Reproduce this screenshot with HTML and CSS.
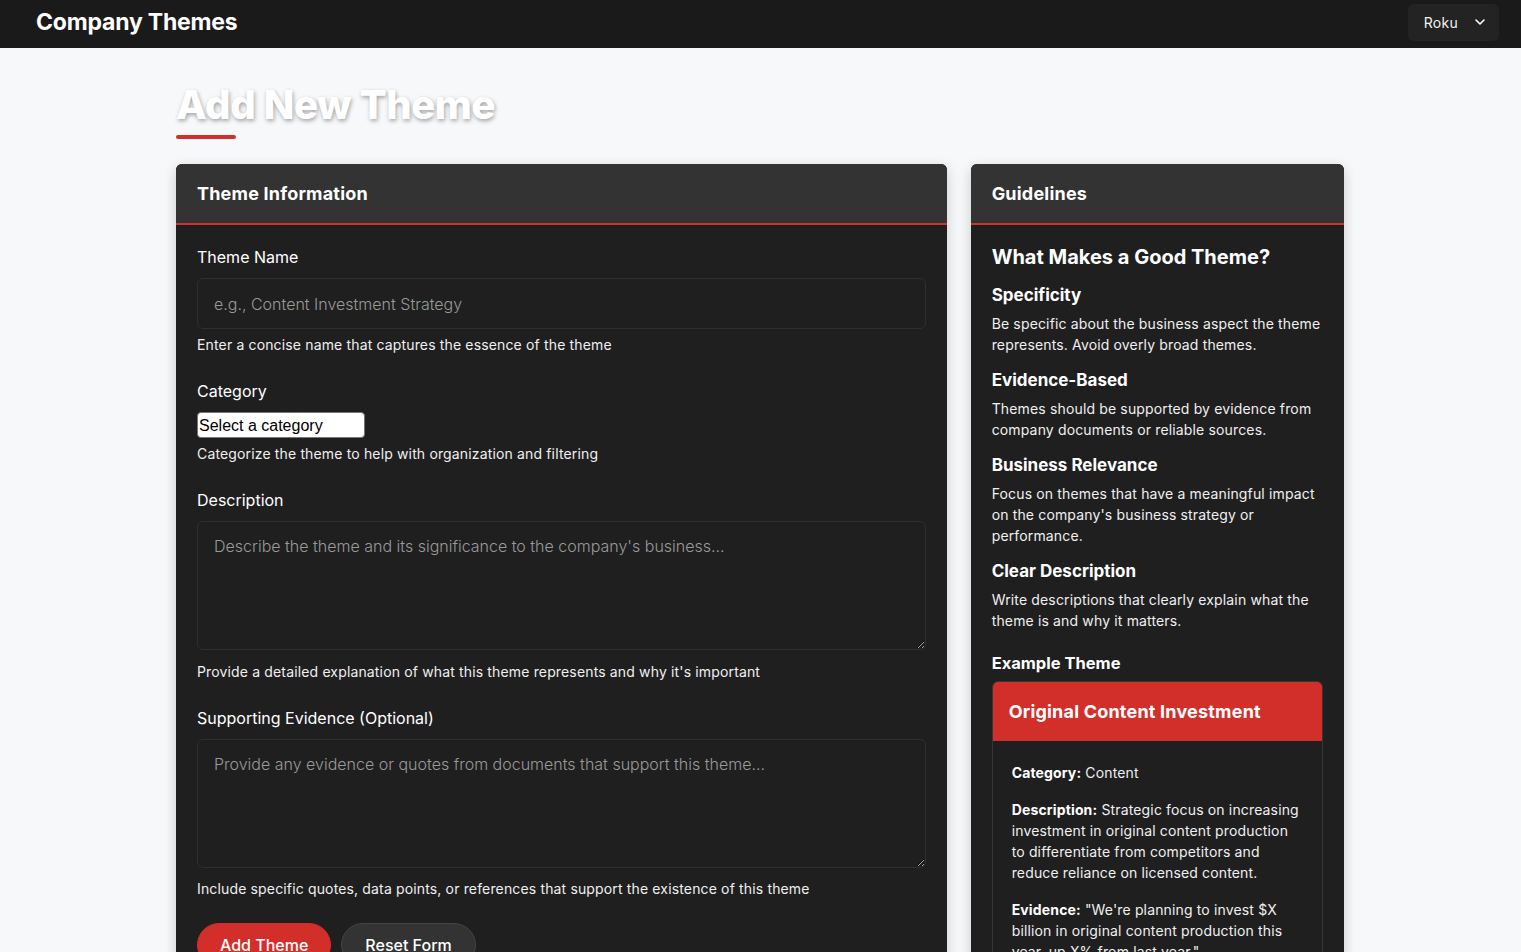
FILE: index.html
```html
<!DOCTYPE html>
<html lang="en">
<head>
<meta charset="utf-8">
<title>Add New Theme</title>
<link rel="stylesheet" href="styles.css">
</head>
<body>
<header class="topbar">
  <div class="brand">Company Themes</div>
  <button class="company-select" type="button">
    <span>Roku</span>
    <svg width="12" height="12" viewBox="0 0 12 12" fill="none" stroke="#ffffff" stroke-width="1.6" stroke-linecap="round" stroke-linejoin="round"><path d="M2 4l4 4 4-4"/></svg>
  </button>
</header>

<main class="container">
  <h1 class="page-title">Add New Theme</h1>
  <div class="title-bar"></div>

  <div class="layout">
    <section class="card">
      <div class="card-header">Theme Information</div>
      <div class="card-body">
        <div class="field">
          <label class="label" for="name">Theme Name</label>
          <input class="input" id="name" type="text" placeholder="e.g., Content Investment Strategy">
          <div class="help">Enter a concise name that captures the essence of the theme</div>
        </div>
        <div class="field">
          <label class="label" for="cat">Category</label>
          <select class="select" id="cat"><option>Select a category</option></select>
          <div class="help">Categorize the theme to help with organization and filtering</div>
        </div>
        <div class="field">
          <label class="label" for="desc">Description</label>
          <textarea class="textarea" id="desc" placeholder="Describe the theme and its significance to the company's business..."></textarea>
          <div class="help">Provide a detailed explanation of what this theme represents and why it's important</div>
        </div>
        <div class="field">
          <label class="label" for="ev">Supporting Evidence (Optional)</label>
          <textarea class="textarea" id="ev" placeholder="Provide any evidence or quotes from documents that support this theme..."></textarea>
          <div class="help">Include specific quotes, data points, or references that support the existence of this theme</div>
        </div>
        <div class="actions">
          <button class="btn btn-primary" type="button">Add Theme</button>
          <button class="btn btn-secondary" type="button">Reset Form</button>
        </div>
      </div>
    </section>

    <aside class="card">
      <div class="card-header">Guidelines</div>
      <div class="card-body">
        <h3 class="guide-title">What Makes a Good Theme?</h3>
        <h4 class="guide-h">Specificity</h4>
        <p class="guide-p">Be specific about the business aspect the theme represents. Avoid overly broad themes.</p>
        <h4 class="guide-h">Evidence-Based</h4>
        <p class="guide-p">Themes should be supported by evidence from company documents or reliable sources.</p>
        <h4 class="guide-h">Business Relevance</h4>
        <p class="guide-p">Focus on themes that have a meaningful impact on the company's business strategy or performance.</p>
        <h4 class="guide-h">Clear Description</h4>
        <p class="guide-p">Write descriptions that clearly explain what the theme is and why it matters.</p>

        <h4 class="guide-h example-label">Example Theme</h4>
        <div class="example">
          <div class="example-header">Original Content Investment</div>
          <div class="example-body">
            <p><strong>Category:</strong> Content</p>
            <p><strong>Description:</strong> Strategic focus on increasing investment in original content production to differentiate from competitors and reduce reliance on licensed content.</p>
            <p><strong>Evidence:</strong> "We're planning to invest $X billion in original content production this year, up X% from last year."</p>
          </div>
        </div>
      </div>
    </aside>
  </div>
</main>
</body>
</html>
```

FILE: styles.css
```css
* { box-sizing: border-box; }

html, body {
  margin: 0;
  padding: 0;
}

body {
  background: #f7f8fa;
  font-family: Inter, "Noto Sans", "Liberation Sans", sans-serif;
  color: #ffffff;
}

.topbar {
  height: 48px;
  background: #1a1a1a;
  display: flex;
  align-items: center;
  justify-content: space-between;
  padding: 0 22px 4px 36px;
}

.brand {
  font-size: 23px;
  font-weight: 700;
  color: #ffffff;
  letter-spacing: -0.2px;
}

.company-select {
  display: flex;
  align-items: center;
  gap: 16px;
  height: 37px;
  padding: 0 13px 0 16px;
  background: #232323;
  border: none;
  border-radius: 6px;
  color: #f2f2f2;
  font-family: Inter, "Liberation Sans", sans-serif;
  font-size: 14px;
  letter-spacing: 0.3px;
}

.container {
  width: 1168px;
  margin-left: calc(50% - 584.5px);
  padding-top: 33px;
}

.page-title {
  margin: 0;
  font-size: 40px;
  line-height: 48px;
  font-weight: 800;
  color: #ffffff;
  text-shadow: 1px 2px 4px rgba(0, 0, 0, 0.35);
  letter-spacing: -0.4px;
}

.title-bar {
  width: 60px;
  height: 4px;
  background: #d32f2f;
  border-radius: 2px;
  margin-top: 6px;
  margin-bottom: 25px;
}

.layout {
  display: grid;
  grid-template-columns: 770.67fr 373.33fr;
  gap: 24px;
  align-items: start;
}

.card {
  background: #1f1f1f;
  border-radius: 6px;
  box-shadow: 0 4px 14px rgba(0, 0, 0, 0.18);
  overflow: hidden;
}

.card-header {
  background: #333333;
  padding: 16px 21px;
  font-size: 18px;
  line-height: 27px;
  font-weight: 700;
  color: #ffffff;
  border-bottom: 2px solid #d32f2f;
  letter-spacing: 0.2px;
}

.card-body {
  padding: 20px 21px 21px;
}

.field {
  margin-bottom: 24px;
}

.label {
  display: block;
  font-size: 16px;
  line-height: 24px;
  margin-bottom: 9px;
  color: #ffffff;
}

.input,
.textarea {
  display: block;
  width: 100%;
  background: #1f1f1f;
  border: 1px solid #2f2f2f;
  border-radius: 6px;
  color: #ffffff;
  font-family: Inter, "Liberation Sans", sans-serif;
  font-size: 16px;
  line-height: 24px;
  padding: 12px 16px;
  outline: none;
}

.input { height: 51px; }

.textarea {
  height: 129px;
  resize: vertical;
  margin-bottom: 10.5px;
}

.input::placeholder,
.textarea::placeholder {
  color: #9a9a9a;
  font-weight: 300;
}

.select {
  display: block;
  -webkit-appearance: none;
  appearance: none;
  width: 168px;
  height: 26px;
  margin-top: 8px;
  padding: 0 0 0 1px;
  background: #ffffff;
  color: #000000;
  border: 1px solid #767676;
  border-radius: 4px;
  font-family: "Liberation Sans", Arial, sans-serif;
  font-size: 16px;
}

.help {
  margin-top: 5px;
  font-size: 14px;
  line-height: 21px;
  color: #f0f0f0;
  letter-spacing: 0.15px;
}

.actions {
  display: flex;
  gap: 10px;
}

.btn {
  font-family: Inter, "Liberation Sans", sans-serif;
  font-size: 16px;
  font-weight: 500;
  height: 44px;
  padding: 0 22px;
  border-radius: 24px;
  color: #ffffff;
  cursor: pointer;
}

.btn-primary {
  background: #d32f2a;
  border: 1px solid #d32f2a;
}

.btn-secondary {
  padding: 0 23px;
  background: #333333;
  border: 1px solid #444444;
}

.guide-title {
  margin: 0 0 16px;
  font-size: 20px;
  line-height: 24px;
  font-weight: 700;
  color: #ffffff;
}

.guide-h {
  margin: 0 0 8px;
  font-size: 17px;
  line-height: 20px;
  font-weight: 700;
  color: #ffffff;
}

.guide-p {
  margin: 0 0 15px;
  font-size: 14px;
  line-height: 21px;
  color: #f0f0f0;
  letter-spacing: 0.15px;
}

.example-label {
  margin-top: 22px;
  font-size: 16.5px;
}

.example {
  margin-top: 8px;
  border: 1px solid #363636;
  border-radius: 6px;
  overflow: hidden;
}

.example-header {
  background: #d32f2a;
  padding: 16px;
  font-size: 18px;
  line-height: 27px;
  font-weight: 700;
  color: #ffffff;
  letter-spacing: 0.2px;
}

.example-body {
  padding: 21px 19px 20px;
  font-size: 14px;
  line-height: 21px;
  color: #f0f0f0;
  letter-spacing: 0.15px;
}

.example-body p {
  margin: 0 0 16px;
}

.example-body strong {
  color: #ffffff;
  font-weight: 700;
}
```
